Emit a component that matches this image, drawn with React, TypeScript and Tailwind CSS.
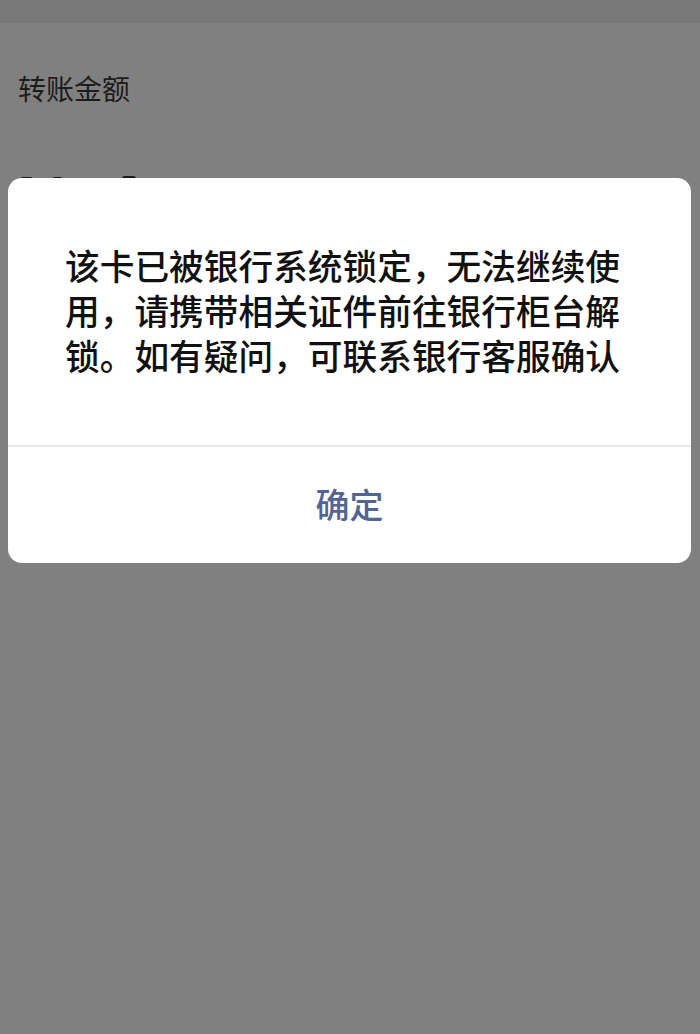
import React from "react";

const lines = [
  "该卡已被银行系统锁定，无法继续使",
  "用，请携带相关证件前往银行柜台解",
  "锁。如有疑问，可联系银行客服确认",
];

export default function App() {
  return (
    <div
      className="relative w-[700px] h-[1034px] bg-[#808080] overflow-hidden"
      style={{ fontFamily: '"Noto Sans CJK SC", "Noto Sans", sans-serif' }}
    >
      {/* status / nav strip */}
      <div className="h-[23px] bg-[#787878]" />

      <div className="px-[18px] pt-[48px] text-[28px] leading-[34px] text-[#1c1c1c]">转账金额</div>

      {/* tops of the amount digits peeking behind the dialog */}
      <div className="flex items-start pl-[20px] pt-[72px]">
        <div className="w-[13px] h-[6px] bg-[#1a1a1a] rounded-sm" />
        <div className="w-[11px] h-[6px] bg-[#1a1a1a] rounded-sm ml-[19px]" />
        <div className="w-[14px] h-[6px] bg-[#1a1a1a] rounded-sm ml-[59px] -mt-[1px]" />
      </div>

      {/* alert dialog */}
      <div className="absolute left-[8px] top-[178px] w-[683px] bg-white rounded-[14px] overflow-hidden">
        <div className="pl-[57px] pr-[40px] pt-[65px] pb-[67px] text-[34.7px] leading-[45px] font-medium text-[#111111]">
          {lines.map((l) => (
            <div key={l} className="whitespace-nowrap">
              {l}
            </div>
          ))}
        </div>
        <div className="h-[2px] bg-[#e8e8e8]" />
        <div className="h-[116px] pb-[3px] flex items-center justify-center text-[34px] font-medium text-[#52648f]">
          确定
        </div>
      </div>
    </div>
  );
}
